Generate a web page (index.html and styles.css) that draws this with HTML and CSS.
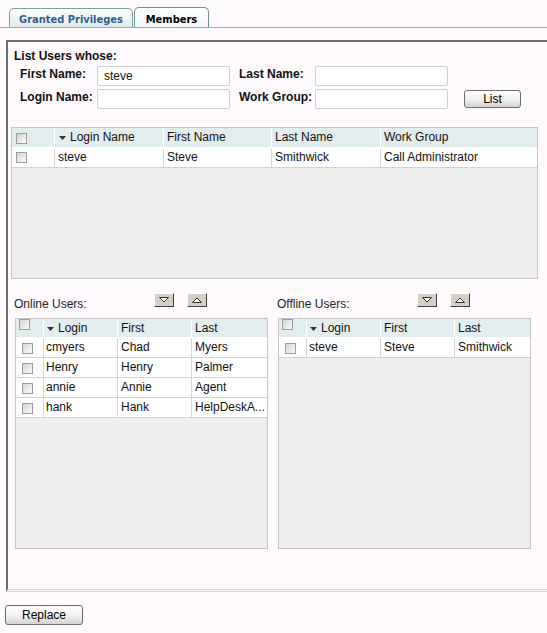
FILE: index.html
```html
<!DOCTYPE html>
<html lang="en">
<head>
    <meta charset="UTF-8">
    <title>Members</title>
    <link rel="stylesheet" href="styles.css">
</head>
<body>
    <!-- Tabs -->
    <div class="tabs">
        <div class="tab">Granted Privileges</div>
        <div class="tab tab-active">Members</div>
    </div>

    <div class="panel">
        <!-- Search criteria -->
        <div class="criteria">
            <div class="criteria-title">List Users whose:</div>
            <div class="field-row">
                <label class="field-label">First Name:</label>
                <input class="field-input" type="text" value="steve">
                <label class="field-label field-label-second">Last Name:</label>
                <input class="field-input" type="text">
            </div>
            <div class="field-row">
                <label class="field-label">Login Name:</label>
                <input class="field-input" type="text">
                <label class="field-label field-label-second">Work Group:</label>
                <input class="field-input" type="text">
                <button class="btn btn-list">List</button>
            </div>
        </div>

        <!-- Search results -->
        <div class="grid grid-results">
            <div class="grid-row grid-head">
                <div class="cell cell-cb"><span class="cb"></span></div>
                <div class="cell"><svg class="sort" viewBox="0 0 7 4"><polygon points="0,0 7,0 3.5,4"/></svg>Login Name</div>
                <div class="cell">First Name</div>
                <div class="cell">Last Name</div>
                <div class="cell">Work Group</div>
            </div>
            <div class="grid-row">
                <div class="cell cell-cb"><span class="cb"></span></div>
                <div class="cell">steve</div>
                <div class="cell">Steve</div>
                <div class="cell">Smithwick</div>
                <div class="cell">Call Administrator</div>
            </div>
        </div>

        <!-- Online / offline lists -->
        <div class="lists">
            <div class="list">
                <div class="list-head">
                    <span class="list-title">Online Users:</span>
                    <button class="arrow-btn"><svg width="12" height="8" viewBox="0 0 12 8"><polygon points="1.5,1.5 10.5,1.5 6,6" fill="#fff" stroke="#333"/></svg></button>
                    <button class="arrow-btn"><svg width="12" height="8" viewBox="0 0 12 8"><polygon points="1.5,6.5 10.5,6.5 6,2" fill="#fff" stroke="#333"/></svg></button>
                </div>
                <div class="grid grid-users">
                    <div class="grid-row grid-head">
                        <div class="cell cell-cb"><span class="cb"></span></div>
                        <div class="cell"><svg class="sort" viewBox="0 0 7 4"><polygon points="0,0 7,0 3.5,4"/></svg>Login</div>
                        <div class="cell">First</div>
                        <div class="cell">Last</div>
                    </div>
                    <div class="grid-row">
                        <div class="cell cell-cb"><span class="cb"></span></div>
                        <div class="cell">cmyers</div>
                        <div class="cell">Chad</div>
                        <div class="cell">Myers</div>
                    </div>
                    <div class="grid-row">
                        <div class="cell cell-cb"><span class="cb"></span></div>
                        <div class="cell">Henry</div>
                        <div class="cell">Henry</div>
                        <div class="cell">Palmer</div>
                    </div>
                    <div class="grid-row">
                        <div class="cell cell-cb"><span class="cb"></span></div>
                        <div class="cell">annie</div>
                        <div class="cell">Annie</div>
                        <div class="cell">Agent</div>
                    </div>
                    <div class="grid-row">
                        <div class="cell cell-cb"><span class="cb"></span></div>
                        <div class="cell">hank</div>
                        <div class="cell">Hank</div>
                        <div class="cell">HelpDeskA...</div>
                    </div>
                </div>
            </div>

            <div class="list">
                <div class="list-head">
                    <span class="list-title">Offline Users:</span>
                    <button class="arrow-btn"><svg width="12" height="8" viewBox="0 0 12 8"><polygon points="1.5,1.5 10.5,1.5 6,6" fill="#fff" stroke="#333"/></svg></button>
                    <button class="arrow-btn"><svg width="12" height="8" viewBox="0 0 12 8"><polygon points="1.5,6.5 10.5,6.5 6,2" fill="#fff" stroke="#333"/></svg></button>
                </div>
                <div class="grid grid-users">
                    <div class="grid-row grid-head">
                        <div class="cell cell-cb"><span class="cb"></span></div>
                        <div class="cell"><svg class="sort" viewBox="0 0 7 4"><polygon points="0,0 7,0 3.5,4"/></svg>Login</div>
                        <div class="cell">First</div>
                        <div class="cell">Last</div>
                    </div>
                    <div class="grid-row">
                        <div class="cell cell-cb"><span class="cb"></span></div>
                        <div class="cell">steve</div>
                        <div class="cell">Steve</div>
                        <div class="cell">Smithwick</div>
                    </div>
                </div>
            </div>
        </div>
    </div>

    <button class="btn btn-replace">Replace</button>
</body>
</html>
```

FILE: styles.css
```css
body {
    margin: 0;
    background: #fffafe;
    font-family: "Liberation Sans", Arial, sans-serif;
    font-size: 12px;
    color: #111;
    overflow: hidden;
}
.tabs {
    display: flex;
    align-items: flex-end;
    gap: 1px;
    height: 27px;
    padding-left: 9px;
    border-bottom: 1px solid #a8a8a8;
}
.tab {
    box-sizing: border-box;
    width: 124px;
    height: 19px;
    padding-top: 3px;
    line-height: 15px;
    text-align: center;
    border: 1px solid #7f9f9f;
    border-bottom: none;
    border-radius: 5px 5px 0 0;
    background: linear-gradient(#ffffff, #e2ebeb);
    font-family: "DejaVu Sans Condensed", "DejaVu Sans", sans-serif;
    font-weight: bold;
    font-size: 11px;
    color: #2f5d8c;
}
.tab-active {
    width: 75px;
    height: 20px;
    padding-top: 4px;
    color: #000;
    background: linear-gradient(#ffffff, #f5f8f8);
    border-color: #6b8f8f;
}
.panel {
    box-sizing: border-box;
    height: 552px;
    margin: 12px 0 0 6px;
    border-top: 2px solid #6e6e6e;
    border-left: 2px solid #6e6e6e;
    border-bottom: 3px double #d4d4d4;
}
.criteria {
    padding: 7px 0 0 6px;
}
.criteria-title {
    font-weight: bold;
    line-height: 14px;
}
.field-row {
    display: flex;
    align-items: flex-start;
    height: 20px;
    margin-top: 3px;
    padding-left: 6px;
}
.field-label {
    width: 77px;
    font-weight: bold;
    line-height: 17px;
}
.field-label-second {
    width: 76px;
    margin-left: 9px;
}
.field-input {
    box-sizing: border-box;
    width: 133px;
    height: 20px;
    margin: 0;
    padding: 0 6px;
    border: 1px solid #d0d0d0;
    border-radius: 2px;
    background: #fff;
    font: 12px "Liberation Sans", Arial, sans-serif;
    color: #111;
    outline: none;
}
.btn {
    box-sizing: border-box;
    padding: 0;
    border: 1px solid #6d6d6d;
    border-radius: 3px;
    background: linear-gradient(#fefefe, #f1f1f1 55%, #d3d3d3);
    font: 12px "Liberation Sans", Arial, sans-serif;
    color: #000;
}
.btn-list {
    width: 57px;
    height: 18px;
    margin: 1px 0 0 16px;
}
.btn-replace {
    display: block;
    width: 78px;
    height: 20px;
    margin: 13px 0 0 5px;
}
.grid {
    box-sizing: border-box;
    border: 1px solid #c6c6c6;
    background: #eeeeee;
    overflow: hidden;
}
.grid-results {
    width: 527px;
    height: 152px;
    margin: 18px 0 0 3px;
}
.grid-row {
    display: grid;
    height: 20px;
}
.grid-results .grid-row {
    grid-template-columns: 43px 109px 108px 109px 1fr;
}
.grid-users .grid-row {
    grid-template-columns: 28px 74px 74px 1fr;
}
.grid-users .grid-head {
    height: 19px;
}
.cell {
    box-sizing: border-box;
    padding-left: 3px;
    line-height: 19px;
    background: #fff;
    border-right: 1px solid #d6d6d6;
    border-bottom: 1px solid #d2d2d2;
    white-space: nowrap;
    overflow: hidden;
}
.cell:last-child {
    border-right: none;
}
.grid-head .cell {
    background: #e4eded;
    border-right-color: #fff;
    border-bottom-color: #fff;
}
.grid-users .grid-head .cell {
    line-height: 18px;
}
.grid-users .cell:nth-child(2) {
    padding-left: 2px;
}
.cell-cb {
    padding: 4px 0 0 4px;
}
.grid-results .grid-head .cell-cb {
    padding-top: 5px;
}
.grid-users .cell-cb {
    padding: 5px 0 0 6px;
}
.grid-users .grid-head .cell-cb {
    padding: 0 0 0 3px;
}
.cb {
    display: block;
    box-sizing: border-box;
    width: 11px;
    height: 11px;
    border: 1px solid #9c9c9c;
    background: linear-gradient(135deg, #d4d4d4, #fbfbfb);
}
.sort {
    width: 7px;
    height: 4px;
    margin: 0 4px 0 1px;
    vertical-align: middle;
    fill: #333;
}
.lists {
    display: flex;
    gap: 9px;
    margin: 14px 0 0 6px;
}
.list {
    width: 254px;
}
.list-head {
    display: flex;
    align-items: flex-start;
    height: 18px;
}
.list-title {
    width: 140px;
    padding-top: 4px;
    line-height: 14px;
    color: #222;
}
.arrow-btn {
    box-sizing: border-box;
    display: flex;
    align-items: center;
    justify-content: center;
    width: 20px;
    height: 14px;
    padding: 0;
    border: 1px solid;
    border-color: #fff #404040 #404040 #fff;
    background: #d4d0c8;
}
.arrow-btn + .arrow-btn {
    margin-left: 13px;
}
.grid-users {
    width: 253px;
    height: 231px;
    margin: 7px 0 0 1px;
}
```
